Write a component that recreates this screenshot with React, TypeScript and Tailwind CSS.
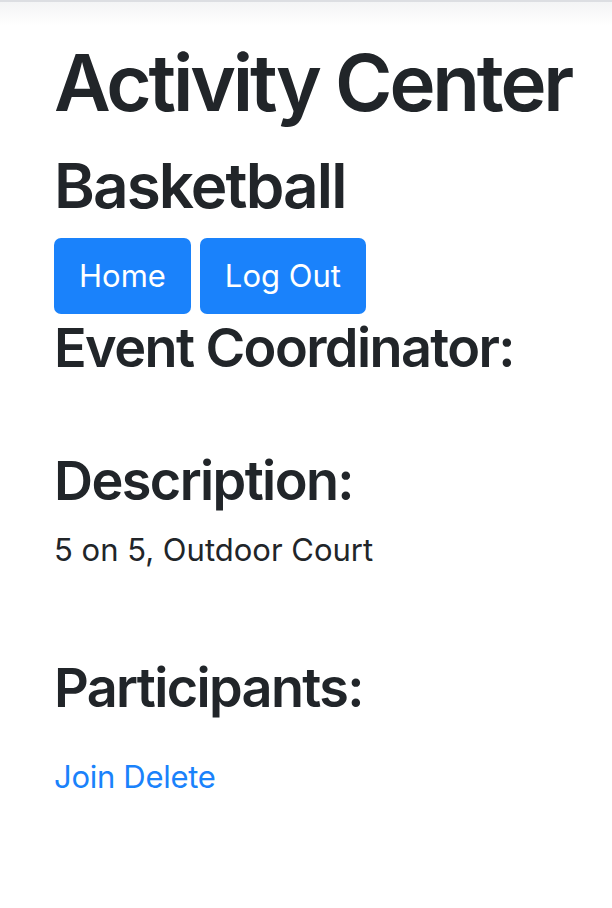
import React from "react";

export default function App() {
  return (
    <div className="min-h-[908px] bg-white text-[#212529]" style={{ fontFamily: "Inter, 'Noto Sans', sans-serif" }}>
      <div className="h-[2px] bg-[#dcdee2]" />
      <div className="h-[24px] bg-gradient-to-b from-[#f3f4f5] to-white" />
      <div className="pl-[54px]">
        <h1 className="mt-[9px] text-[78px] font-semibold leading-[96px] tracking-[-3.2px] mb-[16px]">Activity Center</h1>
        <h2 className="text-[62px] font-semibold leading-[77px] tracking-[-1.9px] mb-[14px]">Basketball</h2>
        <div className="flex gap-[9px]">
          <button className="h-[76px] px-[25px] rounded-[7px] bg-[#1a82fb] text-white text-[31px] leading-[48px]">Home</button>
          <button className="h-[76px] px-[25px] rounded-[7px] bg-[#1a82fb] text-white text-[31px] leading-[48px]">Log Out</button>
        </div>
        <h3 className="text-[54px] font-semibold leading-[67px] tracking-[-1.6px] mb-[66px]">Event Coordinator:</h3>
        <h3 className="text-[54px] font-semibold leading-[67px] tracking-[-1.6px] mb-[12px]">Description:</h3>
        <p className="text-[31px] leading-[48px] mb-[80px]">5 on 5, Outdoor Court</p>
        <h3 className="text-[54px] font-semibold leading-[67px] tracking-[-1.65px] mb-[32px]">Participants:</h3>
        <div className="text-[31px] leading-[48px] tracking-[-0.3px] text-[#1a82fb]">
          <a>Join</a> <a>Delete</a>
        </div>
      </div>
    </div>
  );
}
